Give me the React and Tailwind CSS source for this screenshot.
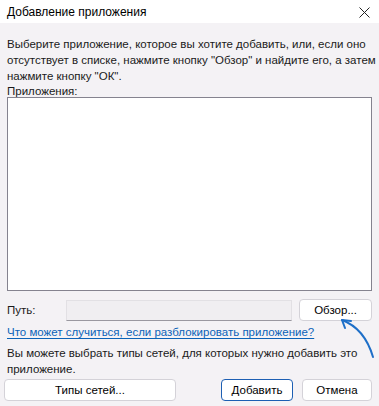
export default function App() {
  return (
    <div
      className="relative w-[379px] h-[406px] bg-[#f4f2f5] text-[11.5px] leading-[16px] text-[#1a1a1a] overflow-hidden whitespace-nowrap"
      style={{ fontFamily: '"Liberation Sans", Arial, sans-serif' }}
    >
      {/* title bar */}
      <div className="h-[23px] bg-white flex items-center justify-between pl-[7px] pr-[9px]">
        <span className="text-[12px] text-black">Добавление приложения</span>
        <svg width="11" height="11" viewBox="0 0 11 11" className="mt-[1px]">
          <path d="M0.5 0.5 L10.5 10.5 M10.5 0.5 L0.5 10.5" stroke="#222" strokeWidth="1" />
        </svg>
      </div>

      <div className="px-[7px] pt-[13px]">
        <p>
          Выберите приложение, которое вы хотите добавить, или, если оно
          <br />
          отсутствует в списке, нажмите кнопку "Обзор" и найдите его, а затем
          <br />
          нажмите кнопку "ОК".
        </p>
        <p className="mt-[-1px]">Приложения:</p>
        <div className="mt-[-2px] h-[194px] bg-white border border-[#85838f]" />

        <div className="mt-[8px] flex items-center h-[22px]">
          <span className="w-[59px]">Путь:</span>
          <div className="w-[227px] h-[21px] bg-[#f0eef1] border border-[#e2e0e4] border-b-[#9a98a0]" />
          <button className="ml-[7px] w-[73px] h-[22px] bg-white border border-[#d4d2d8] rounded-[4px] text-black">
            Обзор...
          </button>
        </div>

        <a className="block mt-[3px] text-[#0b63b8] underline underline-offset-[2px]">
          Что может случиться, если разблокировать приложение?
        </a>

        <p className="mt-[5px]">
          Вы можете выбрать типы сетей, для которых нужно добавить это
          <br />
          приложение.
        </p>
      </div>

      <div className="mt-[2px] flex items-center pl-[4px] pr-[7px]">
        <button className="w-[172px] h-[22px] bg-white border border-[#d4d2d8] rounded-[4px] text-black">
          Типы сетей...
        </button>
        <button className="ml-auto w-[72px] h-[22px] bg-white border border-[#1d5fb3] rounded-[4px] text-black">
          Добавить
        </button>
        <button className="ml-[9px] w-[70px] h-[22px] bg-white border border-[#d4d2d8] rounded-[4px] text-black">
          Отмена
        </button>
      </div>

      {/* arrow annotation */}
      <svg className="absolute left-0 top-0 pointer-events-none" width="379" height="406">
        <path
          d="M373 357 C368 340 358 326 342 320"
          fill="none"
          stroke="#1e6fc8"
          strokeWidth="2"
          strokeLinecap="round"
        />
        <path
          d="M351 321 L342 320 L345 328"
          fill="none"
          stroke="#1e6fc8"
          strokeWidth="2"
          strokeLinecap="round"
          strokeLinejoin="round"
        />
      </svg>
    </div>
  );
}
